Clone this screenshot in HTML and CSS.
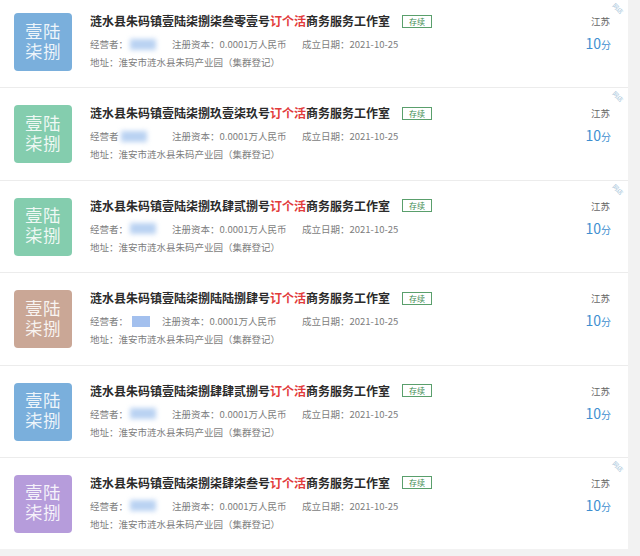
FILE: index.html
```html
<!DOCTYPE html>
<html lang="zh-CN">
<head>
    <meta charset="UTF-8">
    <meta name="viewport" content="width=device-width, initial-scale=1.0">
    <title>企业列表</title>
    <link rel="stylesheet" href="styles.css">
</head>
<body>
    <div class="list">
        <div class="card">
            <div class="logo logo-blue"><span>壹陆</span><span>柒捌</span></div>
            <div class="info">
                <div class="title">涟水县朱码镇壹陆柒捌柒叁零壹号<span class="red">订个活</span>商务服务工作室<span class="tag">存续</span></div>
                <div class="meta">
                    <span class="owner">经营者：<span class="blur"></span></span>
                    <span class="capital">注册资本：0.0001万人民币</span>
                    <span>成立日期：2021-10-25</span>
                </div>
                <div class="meta">地址：淮安市涟水县朱码产业园（集群登记）</div>
            </div>
            <div class="side">
                <div class="area">江苏</div>
                <div class="score">10<small>分</small></div>
            </div>
            <span class="corner">网店</span>
        </div>

        <div class="card">
            <div class="logo logo-green"><span>壹陆</span><span>柒捌</span></div>
            <div class="info">
                <div class="title">涟水县朱码镇壹陆柒捌玖壹柒玖号<span class="red">订个活</span>商务服务工作室<span class="tag">存续</span></div>
                <div class="meta">
                    <span class="owner">经营者<span class="blur"></span></span>
                    <span class="capital">注册资本：0.0001万人民币</span>
                    <span>成立日期：2021-10-25</span>
                </div>
                <div class="meta">地址：淮安市涟水县朱码产业园（集群登记）</div>
            </div>
            <div class="side">
                <div class="area">江苏</div>
                <div class="score">10<small>分</small></div>
            </div>
            <span class="corner">网店</span>
        </div>

        <div class="card">
            <div class="logo logo-green"><span>壹陆</span><span>柒捌</span></div>
            <div class="info">
                <div class="title">涟水县朱码镇壹陆柒捌玖肆贰捌号<span class="red">订个活</span>商务服务工作室<span class="tag">存续</span></div>
                <div class="meta">
                    <span class="owner">经营者：<span class="blur"></span></span>
                    <span class="capital">注册资本：0.0001万人民币</span>
                    <span>成立日期：2021-10-25</span>
                </div>
                <div class="meta">地址：淮安市涟水县朱码产业园（集群登记）</div>
            </div>
            <div class="side">
                <div class="area">江苏</div>
                <div class="score">10<small>分</small></div>
            </div>
            <span class="corner">网店</span>
        </div>

        <div class="card">
            <div class="logo logo-brown"><span>壹陆</span><span>柒捌</span></div>
            <div class="info">
                <div class="title">涟水县朱码镇壹陆柒捌陆陆捌肆号<span class="red">订个活</span>商务服务工作室<span class="tag">存续</span></div>
                <div class="meta">
                    <span class="owner owner-short">经营者：<span class="blur blur-sharp"></span></span>
                    <span class="capital capital-wide">注册资本：0.0001万人民币</span>
                    <span>成立日期：2021-10-25</span>
                </div>
                <div class="meta">地址：淮安市涟水县朱码产业园（集群登记）</div>
            </div>
            <div class="side">
                <div class="area">江苏</div>
                <div class="score">10<small>分</small></div>
            </div>
        </div>

        <div class="card">
            <div class="logo logo-blue"><span>壹陆</span><span>柒捌</span></div>
            <div class="info">
                <div class="title">涟水县朱码镇壹陆柒捌肆肆贰捌号<span class="red">订个活</span>商务服务工作室<span class="tag">存续</span></div>
                <div class="meta">
                    <span class="owner">经营者：<span class="blur"></span></span>
                    <span class="capital">注册资本：0.0001万人民币</span>
                    <span>成立日期：2021-10-25</span>
                </div>
                <div class="meta">地址：淮安市涟水县朱码产业园（集群登记）</div>
            </div>
            <div class="side">
                <div class="area">江苏</div>
                <div class="score">10<small>分</small></div>
            </div>
        </div>

        <div class="card">
            <div class="logo logo-purple"><span>壹陆</span><span>柒捌</span></div>
            <div class="info">
                <div class="title">涟水县朱码镇壹陆柒捌柒肆柒叁号<span class="red">订个活</span>商务服务工作室<span class="tag">存续</span></div>
                <div class="meta">
                    <span class="owner">经营者：<span class="blur"></span></span>
                    <span class="capital">注册资本：0.0001万人民币</span>
                    <span>成立日期：2021-10-25</span>
                </div>
                <div class="meta">地址：淮安市涟水县朱码产业园（集群登记）</div>
            </div>
            <div class="side">
                <div class="area">江苏</div>
                <div class="score">10<small>分</small></div>
            </div>
            <span class="corner">网店</span>
        </div>
    </div>
</body>
</html>
```

FILE: styles.css
```css
* {
    margin: 0;
    padding: 0;
    box-sizing: border-box;
}

body {
    font-family: "Noto Sans CJK SC", "Liberation Sans", sans-serif;
    background: #f2f2f2;
    width: 640px;
    height: 556px;
    overflow: hidden;
}

.list {
    width: 628px;
    background: #fff;
}

.card {
    position: relative;
    display: flex;
    align-items: flex-start;
    height: 92.4px;
    padding: 17px 0 0 14px;
    border-top: 1px solid #ececec;
}

.card:first-child {
    height: 87.4px;
    padding-top: 13px;
    border-top: 0;
}

.logo {
    display: flex;
    flex-direction: column;
    align-items: center;
    justify-content: center;
    gap: 1px;
    width: 58px;
    height: 58px;
    flex-shrink: 0;
    border-radius: 4px;
    font-family: "Liberation Sans", "Noto Sans CJK SC", sans-serif;
    color: rgba(255, 255, 255, 0.88);
    font-size: 17.5px;
    line-height: 19px;
    letter-spacing: 0.5px;
}

.logo-blue { background: #7aafdc; }
.logo-green { background: #84cdae; }
.logo-brown { background: #caa796; }
.logo-purple { background: #b69cdb; }

.info {
    flex: 1;
    margin-left: 18px;
}

.title {
    display: flex;
    align-items: center;
    font-size: 12px;
    line-height: 16px;
    font-weight: 700;
    color: #2b2b2b;
    white-space: nowrap;
}

.red {
    color: #e23b3b;
}

.tag {
    margin-left: 12px;
    height: 13px;
    padding: 0 6px;
    border: 1px solid #5a9f6c;
    color: #3b8b4e;
    font-size: 8px;
    font-weight: 400;
    line-height: 11px;
}

.meta {
    display: flex;
    align-items: center;
    font-size: 9.5px;
    line-height: 14px;
    color: #7d7d7d;
    margin-top: 4px;
    white-space: nowrap;
}

.title + .meta {
    margin-top: 8px;
}

.owner {
    display: flex;
    align-items: center;
    width: 82px;
}

.owner-short {
    width: 72px;
}

.blur {
    display: inline-block;
    width: 26px;
    height: 11px;
    margin-left: 2px;
    background: #b9d2f2;
    filter: blur(2.5px);
}

.blur-sharp {
    width: 18px;
    margin-left: 4px;
    background: #a3c0ee;
    filter: blur(0.6px);
}

.capital {
    width: 130px;
}

.capital-wide {
    width: 140px;
}

.side {
    width: 40px;
    margin-right: 17px;
    text-align: right;
}

.area {
    font-size: 9.5px;
    line-height: 16px;
    color: #666;
    padding-right: 1px;
}

.score {
    margin-top: 6px;
    font-size: 14px;
    line-height: 16px;
    color: #3f8fd0;
}

.score small {
    font-size: 10px;
}

.corner {
    position: absolute;
    top: 5px;
    right: 4px;
    font-size: 6px;
    line-height: 7px;
    color: #9fbfd8;
    transform: rotate(45deg);
}
```
